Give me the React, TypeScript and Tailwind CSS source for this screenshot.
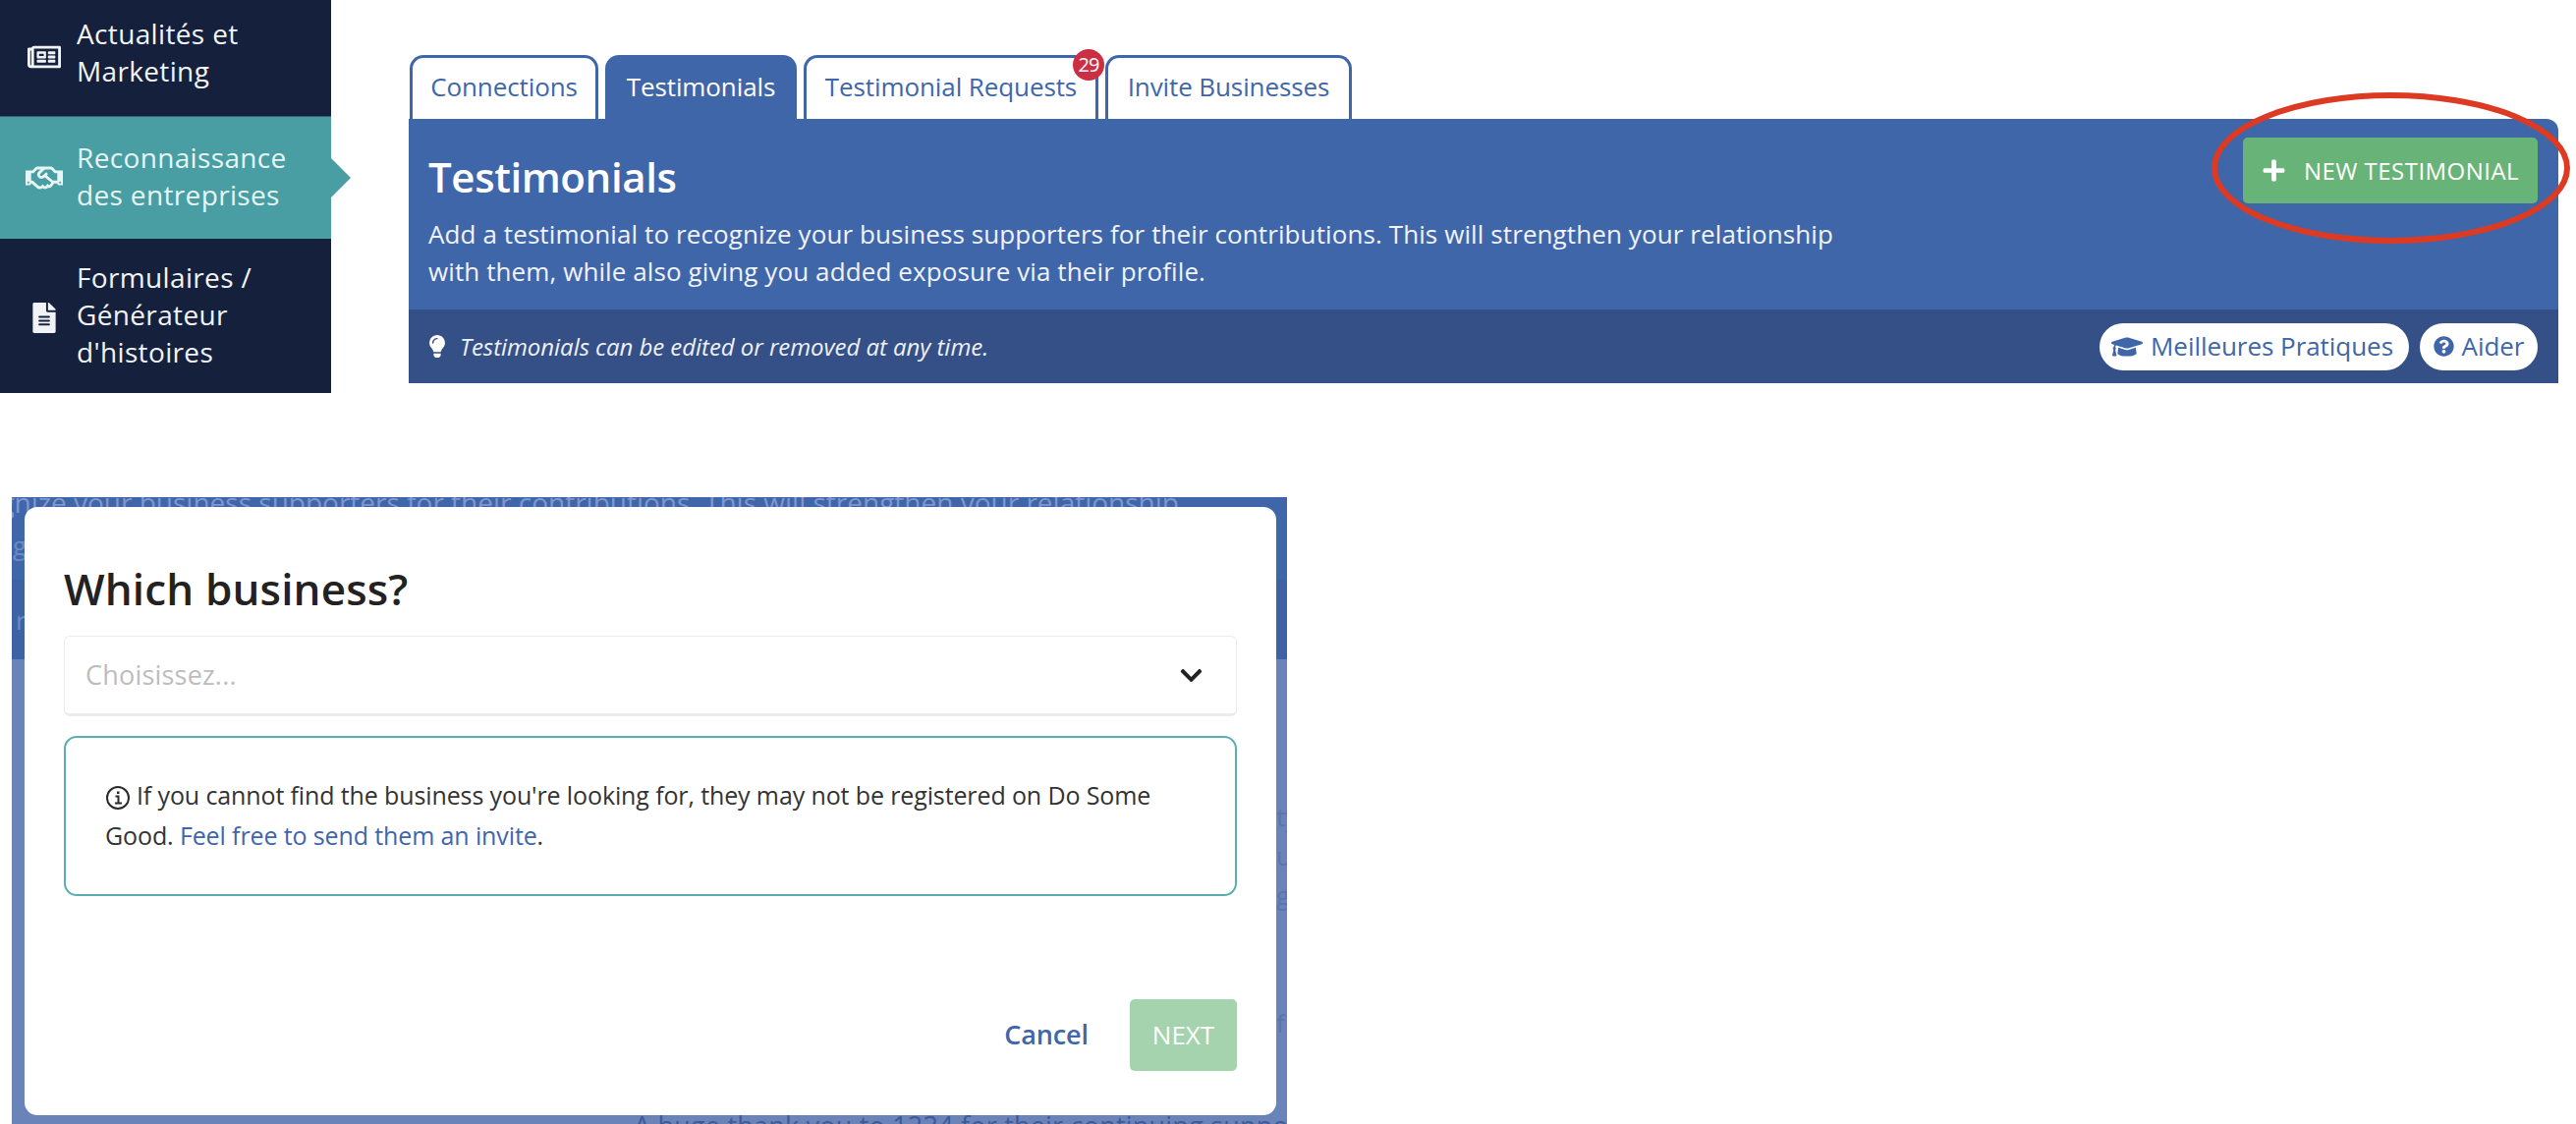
import { FaChevronDown, FaFileAlt, FaGraduationCap, FaLightbulb, FaPlus, FaQuestionCircle, FaRegHandshake, FaRegNewspaper } from 'react-icons/fa';

const tabs = [
  { label: 'Connections', width: 'w-[192px]', active: false },
  { label: 'Testimonials', width: 'w-[195px]', active: true },
  { label: 'Testimonial Requests', width: 'w-[300px]', active: false },
  { label: 'Invite Businesses', width: 'w-[251px]', active: false },
];

function Sidebar() {
  return (
    <aside className="w-[337px] h-[400px] shrink-0 flex flex-col bg-[#15203c] text-[28px] leading-[38px] tracking-[0.35px] text-[#f1f3f6]">
      <div className="h-[118px] flex items-center gap-[16px] pl-[28px] pb-[12px]">
        <FaRegNewspaper className="w-[34px] h-[34px] shrink-0 mt-[10px]" />
        <span>Actualités et<br />Marketing</span>
      </div>
      <div className="relative h-[125px] flex items-center gap-[14px] pl-[26px] pb-[5px] bg-[#489ea2] text-[#e8f5f5] border-t border-[#3d5a70]">
        <FaRegHandshake className="w-[38px] h-[38px] shrink-0 mt-[4px]" />
        <span>Reconnaissance<br />des entreprises</span>
        <div className="absolute left-[337px] top-[42px] w-0 h-0 border-y-[20px] border-y-transparent border-l-[20px] border-l-[#489ea2]" />
      </div>
      <div className="flex-1 flex items-center gap-[20px] pl-[32px] pb-[3px]">
        <FaFileAlt className="w-[26px] h-[31px] shrink-0 mt-[7px]" />
        <span>Formulaires /<br />Générateur<br />d'histoires</span>
      </div>
    </aside>
  );
}

function Header() {
  return (
    <main className="relative ml-[79px] pt-[56px] w-[2188px]">
      <div className="flex gap-[7px] pl-[1px] h-[65px]">
        {tabs.map((tab) => (
          <div
            key={tab.label}
            className={`${tab.width} relative flex items-center justify-center rounded-t-[14px] border-x-[3px] border-t-[3px] border-[#4066aa] text-[26px] tracking-[-0.1px] pb-[3px] ${tab.active ? 'bg-[#4066aa] text-white' : 'bg-white text-[#4066aa]'}`}
          >
            {tab.label}
            {tab.label === 'Testimonial Requests' && (
              <span className="absolute left-[271px] -top-[9px] w-[32px] h-[32px] flex items-center justify-center rounded-full bg-[#cc2e44] text-white text-[20px] tracking-[-1px]">29</span>
            )}
          </div>
        ))}
      </div>
      <section className="rounded-tr-[12px] overflow-hidden bg-[#4066aa] text-white">
        <div className="relative h-[194px] pl-[20px] pt-[33px]">
          <h1 className="text-[42px] leading-[52px] font-semibold tracking-[-0.4px]">Testimonials</h1>
          <p className="mt-[13px] text-[26px] leading-[38px] tracking-[0.1px] text-[#f0f3f9]">
            Add a testimonial to recognize your business supporters for their contributions. This will strengthen your relationship<br />
            with them, while also giving you added exposure via their profile.
          </p>
          <button className="absolute right-[21px] top-[19px] w-[300px] h-[67px] flex items-center justify-center gap-[18px] rounded-[5px] bg-[#68b378] text-[24px] tracking-[0.47px]">
            <FaPlus className="w-[25px] h-[25px]" />
            NEW TESTIMONIAL
          </button>
        </div>
        <div className="h-[75px] flex items-center bg-[#345086] pl-[20px] pr-[21px]">
          <FaLightbulb className="w-[18px] h-[23px] text-white" />
          <span className="ml-[14px] italic text-[24px] tracking-[-0.05px] text-[#eef1f7]">Testimonials can be edited or removed at any time.</span>
          <div className="ml-auto flex gap-[11px] text-[#4066aa] text-[26px] tracking-[-0.05px]">
            <div className="w-[315px] h-[48px] flex items-center justify-center gap-[8px] rounded-full bg-white pr-[4px]">
              <FaGraduationCap className="w-[32px] h-[32px]" />
              Meilleures Pratiques
            </div>
            <div className="w-[120px] h-[48px] flex items-center justify-center gap-[8px] rounded-full bg-white">
              <FaQuestionCircle className="w-[21px] h-[21px]" />
              Aider
            </div>
          </div>
        </div>
      </section>
      <svg className="absolute left-[1835px] top-[94px] w-[365px] h-[154px]" viewBox="0 0 365 154" fill="none">
        <ellipse cx="182.5" cy="77" rx="179.5" ry="74" stroke="#dc3a22" strokeWidth="6" />
      </svg>
    </main>
  );
}

function InfoIcon() {
  return (
    <svg className="inline-block w-[26px] h-[26px] mr-[6px] align-[-6px]" viewBox="0 0 26 26" fill="none" stroke="#2b2b2b">
      <circle cx="13" cy="13" r="11" strokeWidth="2" />
      <path d="M10.5 11.5h3v7M10 18.5h7" strokeWidth="2" />
      <path d="M12 6.5h2.5v2.5H12z" fill="#2b2b2b" strokeWidth="0" />
    </svg>
  );
}

function Modal() {
  return (
    <div className="relative mt-[106px] ml-[12px] w-[1298px] h-[638px] overflow-hidden bg-[#6a84ba] pt-[10px] pl-[13px] pr-[11px] text-[#2b2b2b]">
      {/* page behind the dialog */}
      <div className="absolute inset-x-0 top-0 h-[84px] bg-[#4066aa]" />
      <div className="absolute inset-x-0 top-[84px] h-[81px] bg-[#3e62a4]" />
      <p className="absolute right-[110px] -top-[14px] whitespace-nowrap text-[28px] leading-[38px] text-[#7f97ca]">
        Add a testimonial to recognize your business supporters for their contributions. This will strengthen your relationship
      </p>
      <span className="absolute left-[1px] top-[30px] text-[26px] leading-[38px] text-[#6f8bc4]">g</span>
      <span className="absolute left-[4px] top-[106px] text-[26px] leading-[38px] text-[#6f8bc4]">r</span>
      <span className="absolute left-[1287px] top-[306px] text-[26px] leading-[38px] text-[#5a75ae]">ty</span>
      <span className="absolute left-[1287px] top-[346px] text-[26px] leading-[38px] text-[#5a75ae]">u</span>
      <span className="absolute left-[1287px] top-[386px] text-[26px] leading-[38px] text-[#5a75ae]">g</span>
      <span className="absolute left-[1287px] top-[516px] text-[26px] leading-[38px] text-[#5a75ae]">f</span>
      <p className="absolute left-[633px] top-[621px] whitespace-nowrap text-[27px] leading-[38px] tracking-[0.2px] text-[#3f5a98]">
        A huge thank you to 1234 for their continuing support
      </p>

      <div className="relative w-[1274px] h-[619px] rounded-[13px] bg-white pt-[57px] pl-[40px] pr-[40px]">
        <h2 className="text-[44px] leading-[52px] font-semibold tracking-[0.15px] text-[#222]">Which business?</h2>
        <div className="mt-[22px] h-[82px] flex items-center justify-between rounded-[6px] border border-[#ececec] border-b-[3px] pl-[21px] pr-[33px]">
          <span className="text-[27px] tracking-[0.2px] text-[#bdbdbd]">Choisissez...</span>
          <FaChevronDown className="w-[25px] h-[25px] text-[#222]" />
        </div>
        <div className="mt-[20px] h-[163px] rounded-[13px] border-2 border-[#5aaeb0] pl-[40px] pr-[40px] pt-[38px] text-[25px] leading-[41px] tracking-[-0.12px] text-[#333]">
          <InfoIcon />If you cannot find the business you're looking for, they may not be registered on Do Some<br />
          Good. <span className="text-[#4066aa]">Feel free to send them an invite</span>.
        </div>
        <div className="mt-[105px] flex items-center justify-end gap-[42px]">
          <span className="text-[27px] font-semibold tracking-[-0.1px] text-[#4066aa]">Cancel</span>
          <button className="w-[109px] h-[73px] rounded-[5px] bg-[#a4d3ae] text-[26px] text-white">NEXT</button>
        </div>
      </div>
    </div>
  );
}

export default function App() {
  return (
    <div className="w-[2622px] h-[1144px] overflow-hidden bg-white font-['Open_Sans',sans-serif]">
      <div className="flex">
        <Sidebar />
        <Header />
      </div>
      <Modal />
    </div>
  );
}
